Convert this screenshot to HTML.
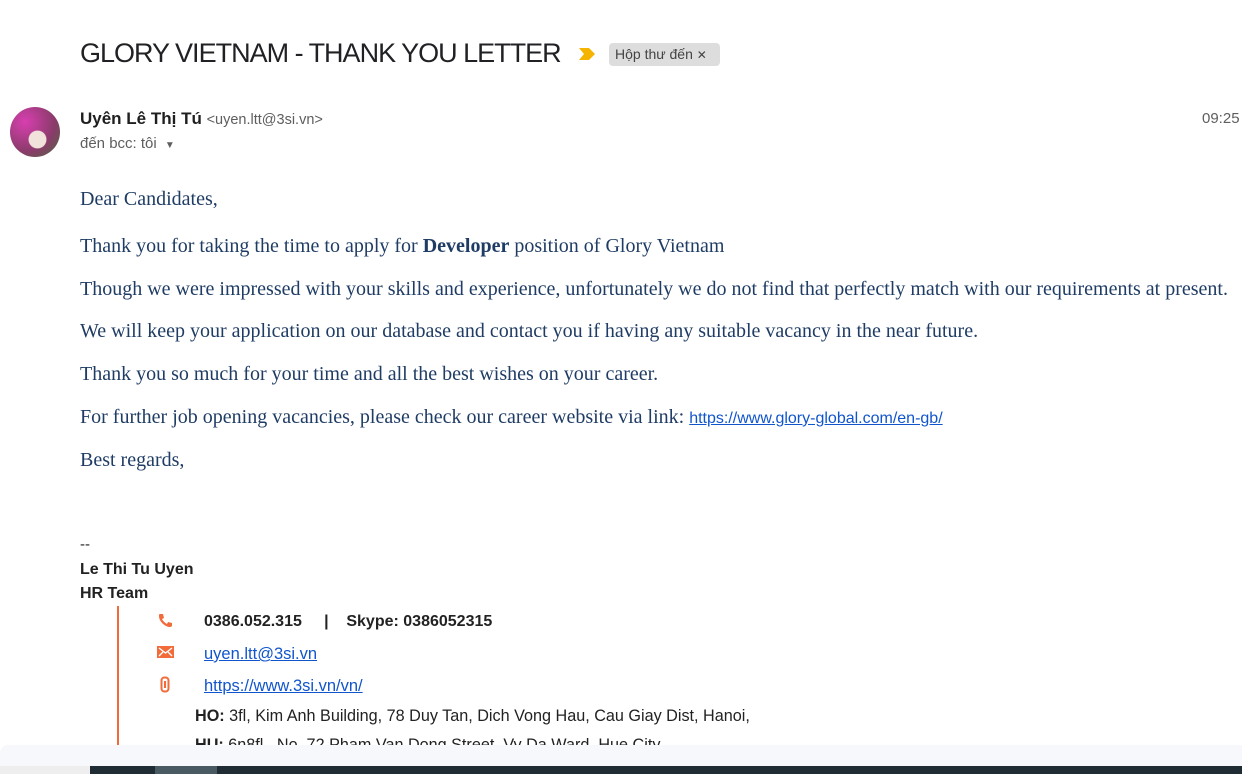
<!DOCTYPE html>
<html><head><meta charset="utf-8"><style>
*{margin:0;padding:0;box-sizing:border-box}
body{width:1242px;height:774px;overflow:hidden;background:#fff;position:relative;font-family:"Liberation Sans",sans-serif}
.a{position:absolute;white-space:nowrap}
.s{font-family:"Liberation Serif",serif;font-size:20px;color:#1f3c64}
.l{color:#1155cc;text-decoration:underline;font-family:"Liberation Sans",sans-serif;font-size:16px}
.sig{font-size:16px;color:#222;font-weight:bold}
</style></head><body>
<div class="a" style="left:80px;top:38px;font-size:27px;color:#202124;letter-spacing:-1px">GLORY VIETNAM - THANK YOU LETTER</div>
<svg class="a" style="left:578px;top:47px" width="18" height="14"><path d="M1 1h10l6 6-6 6H1l5-6z" fill="#f4b400"/></svg>
<div class="a" style="left:609px;top:43px;height:23px;width:111px;padding:0 6px;background:#ddd;border-radius:4px;font-size:14px;color:#444;line-height:23px">Hộp thư đến <span style="font-size:12px">✕</span></div>
<div class="a" style="left:10px;top:107px;width:50px;height:50px;border-radius:50%;background:radial-gradient(circle at 55% 65%,#f2e2dc 0 20%,transparent 22%),radial-gradient(circle at 30% 30%,#d83fb0,#8a3b6a 60%,#4b6b3a)"></div>
<div class="a" style="left:80px;top:109px;font-size:17px;color:#1f1f1f;font-weight:bold">Uyên Lê Thị Tú <span style="font-weight:normal;font-size:14.5px;color:#5e5e5e">&lt;uyen.ltt@3si.vn&gt;</span></div>
<div class="a" style="left:80px;top:135px;font-size:15px;color:#5e5e5e">đến bcc: tôi <span style="font-size:10px;margin-left:4px">▼</span></div>
<div class="a" style="left:1202px;top:110px;font-size:15px;color:#5e5e5e">09:25</div>
<div class="a s" style="left:80px;top:188px">Dear Candidates,</div>
<div class="a s" style="left:80px;top:235px">Thank you for taking the time to apply for <b>Developer</b> position of Glory Vietnam</div>
<div class="a s" style="left:80px;top:278px">Though we were impressed with your skills and experience, unfortunately we do not find that perfectly match with our requirements at present.</div>
<div class="a s" style="left:80px;top:320px">We will keep your application on our database and contact you if having any suitable vacancy in the near future.</div>
<div class="a s" style="left:80px;top:363px">Thank you so much for your time and all the best wishes on your career.</div>
<div class="a s" style="left:80px;top:406px">For further job opening vacancies, please check our career website via link: <span class="l">https://www.glory-global.com/en-gb/</span></div>
<div class="a s" style="left:80px;top:449px">Best regards,</div>
<div class="a" style="left:80px;top:536px;font-size:15px;color:#222">--</div>
<div class="a sig" style="left:80px;top:561px">Le Thi Tu Uyen</div>
<div class="a sig" style="left:80px;top:585px">HR Team</div>
<div class="a" style="left:117px;top:606px;width:2px;height:140px;background:#f26b3a"></div>
<svg class="a" style="left:157px;top:613px" width="16" height="16"><path d="M3 1l3 0 1 4-2 1c1 2 3 4 5 5l1-2 4 1v3c-1 1-2 1-3 1C7 13 2 8 2 3c0-1 0-2 1-2z" fill="#f26b3a"/></svg>
<div class="a sig" style="left:204px;top:613px">0386.052.315 &nbsp;&nbsp;&nbsp;&nbsp;| &nbsp;&nbsp;&nbsp;Skype: 0386052315</div>
<svg class="a" style="left:157px;top:646px" width="17" height="12"><rect width="17" height="12" fill="#f26b3a"/><path d="M2 2l6.5 5L15 2M2 10l4-4M15 10l-4-4" stroke="#fff" stroke-width="1.3" fill="none"/></svg>
<div class="a l" style="left:204px;top:645px;font-size:16.5px">uyen.ltt@3si.vn</div>
<svg class="a" style="left:160px;top:676px" width="10" height="17"><rect x="1.5" y="1.5" width="7" height="14" rx="3" stroke="#f26b3a" stroke-width="2" fill="none"/><path d="M5 5v7" stroke="#f26b3a" stroke-width="2"/></svg>
<div class="a l" style="left:204px;top:677px;font-size:16.5px">https://www.3si.vn/vn/</div>
<div class="a" style="left:195px;top:707px;font-size:16.2px;color:#222"><b>HO:</b> 3fl, Kim Anh Building, 78 Duy Tan, Dich Vong Hau, Cau Giay Dist, Hanoi,</div>
<div class="a" style="left:195px;top:736px;font-size:16.2px;color:#222"><b>HU:</b> 6n8fl., No. 72 Pham Van Dong Street, Vy Da Ward, Hue City</div>
<div class="a" style="left:0;top:745px;width:1242px;height:21px;background:#f6f8fc;border-radius:8px 0 0 0"></div>
<div class="a" style="left:0;top:766px;width:90px;height:8px;background:#eee"></div>
<div class="a" style="left:90px;top:766px;width:1152px;height:8px;background:#1f2c33"></div>
<div class="a" style="left:155px;top:766px;width:62px;height:8px;background:#4a5a62"></div>
</body></html>
